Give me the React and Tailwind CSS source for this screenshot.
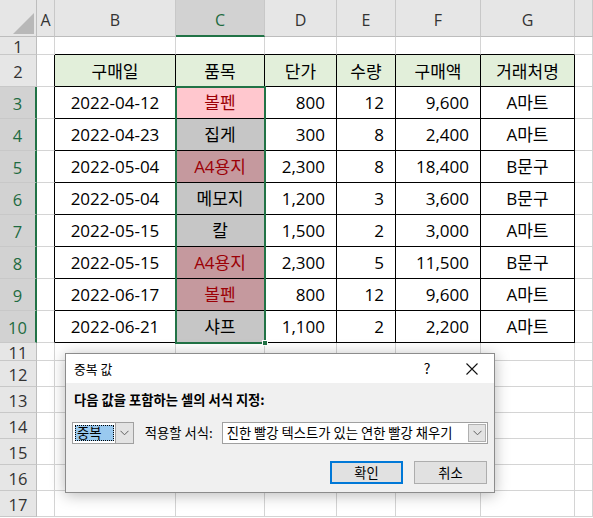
import React from 'react';

const COLS = ['', 'A', 'B', 'C', 'D', 'E', 'F', 'G', ''];
const HEAD = ['구매일', '품목', '단가', '수량', '구매액', '거래처명'];
const ROWS = [
  ['2022-04-12', '볼펜', '800', '12', '9,600', 'A마트'],
  ['2022-04-23', '집게', '300', '8', '2,400', 'A마트'],
  ['2022-05-04', 'A4용지', '2,300', '8', '18,400', 'B문구'],
  ['2022-05-04', '메모지', '1,200', '3', '3,600', 'B문구'],
  ['2022-05-15', '칼', '1,500', '2', '3,000', 'A마트'],
  ['2022-05-15', 'A4용지', '2,300', '5', '11,500', 'B문구'],
  ['2022-06-17', '볼펜', '800', '12', '9,600', 'A마트'],
  ['2022-06-21', '샤프', '1,100', '2', '2,200', 'A마트'],
];
// fill of the selected C column cells (rows 3-10)
const C_FILL = [
  'bg-[#ffc7ce] text-[#9c0006]',
  'bg-[#c6c6c6]',
  'bg-[#c5999e] text-[#9c0006]',
  'bg-[#c6c6c6]',
  'bg-[#c6c6c6]',
  'bg-[#c5999e] text-[#9c0006]',
  'bg-[#c5999e] text-[#9c0006]',
  'bg-[#c6c6c6]',
];

const font = "font-['Open_Sans','Noto_Sans_CJK_KR',sans-serif]";

const Chevron = () => (
  <svg width="9" height="6" viewBox="0 0 9 6" fill="none" stroke="#606060" strokeWidth="1">
    <path d="M0.5 0.8 L4.5 4.8 L8.5 0.8" />
  </svg>
);

const Cell = ({ r, c }) => {
  // column header row
  if (r === 0) {
    if (c === 0) {
      return (
        <div className="relative bg-[#e6e6e6] border-r border-b border-[#bdbdbd]">
          <svg className="absolute left-[13px] top-[13px]" width="21" height="21" viewBox="0 0 21 21">
            <polygon points="21,0 21,21 0,21" fill="#b8b8b8" />
          </svg>
        </div>
      );
    }
    const sel = c === 3;
    return (
      <div
        className={`flex items-center justify-center pt-[4px] text-[16px] border-r border-[#c8c8c8] ${
          sel ? 'bg-[#d2d2d2] text-[#1e6b41] border-b-2 border-b-[#217346]' : 'bg-[#e6e6e6] text-[#333] border-b border-b-[#bdbdbd]'
        }`}
      >
        {COLS[c]}
      </div>
    );
  }
  // row header column
  if (c === 0) {
    const sel = r >= 3 && r <= 10;
    return (
      <div
        className={`flex items-center justify-center pt-[3px] text-[16.5px] border-b border-[#c8c8c8] ${
          sel
            ? 'bg-[#d2d2d2] text-[#1e6b41] border-r-2 border-r-[#217346]'
            : 'bg-[#e6e6e6] text-[#333] border-r border-r-[#bdbdbd]'
        }`}
      >
        {r}
      </div>
    );
  }
  const inTable = r >= 2 && r <= 10 && c >= 2 && c <= 7;
  let cls = 'border-r border-b border-[#d4d4d4] bg-white';
  if (c === 1 && r >= 2 && r <= 10) cls = 'border-r border-b border-[#d4d4d4] border-r-black bg-white';
  if (r === 1 && c >= 2 && c <= 7) cls = 'border-r border-b border-[#d4d4d4] border-b-black bg-white';
  if (!inTable) return <div className={cls} />;

  const k = c - 2;
  if (r === 2) {
    return (
      <div className="flex items-center justify-center pt-[2px] border-r border-b border-black bg-[#e2efda] text-[17px] text-black">
        {HEAD[k]}
      </div>
    );
  }
  const val = ROWS[r - 3][k];
  const right = k >= 2 && k <= 4;
  const fill = k === 1 ? C_FILL[r - 3] : 'bg-white text-black';
  return (
    <div
      className={`flex items-center pt-[1px] border-r border-b border-black text-[17px] ${fill} ${
        right ? 'justify-end pr-[11px]' : 'justify-center'
      } ${k === 1 ? '' : 'text-black'}`}
    >
      {val}
    </div>
  );
};

const Dialog = () => (
  <div className="absolute left-[65px] top-[353px] w-[430px] h-[140px] border border-[#8c8c8c] bg-[#f0f0f0] shadow-[0_2px_14px_rgba(0,0,0,0.28)] flex flex-col font-['Noto_Sans_CJK_KR','Open_Sans',sans-serif] text-[13.3px] text-black">
    <div className="h-[29px] bg-white flex items-center">
      <span className="pl-[8px] text-[12.8px]">중복 값</span>
      <div className="ml-auto flex items-center">
        <span className="w-[46px] text-center text-[14px]">?</span>
        <span className="w-[44px] flex justify-center">
          <svg width="12" height="12" viewBox="0 0 12 12" stroke="#111" strokeWidth="1.1">
            <path d="M0.5 0.5 L11.5 11.5 M11.5 0.5 L0.5 11.5" />
          </svg>
        </span>
      </div>
    </div>
    <div className="flex flex-col px-[6px]">
      <div className="mt-[9px] h-[16px] leading-[16px] pl-[2px] font-bold">다음 값을 포함하는 셀의 서식 지정:</div>
      <div className="mt-[14px] flex items-center h-[22px]">
        <div className="w-[62px] h-[22px] border border-[#a0a0a0] bg-white flex items-stretch p-[2px] pr-0">
          <div className="flex-1 bg-[#99c9ef] border border-dotted border-black flex items-center pl-[1px] leading-none">중복</div>
          <div className="w-[18px] ml-[1px] -my-[2px] bg-[#e3e3e3] border-l border-[#a0a0a0] flex items-center justify-center">
            <Chevron />
          </div>
        </div>
        <span className="ml-[11px] w-[77px]">적용할 서식:</span>
        <div className="w-[267px] h-[22px] border border-[#a0a0a0] bg-white flex items-stretch">
          <div className="flex-1 flex items-center pl-[4px] whitespace-nowrap overflow-hidden">진한 빨강 텍스트가 있는 연한 빨강 채우기</div>
          <div className="w-[18px] my-[1px] mr-[1px] bg-[#e3e3e3] border border-[#b0b0b0] flex items-center justify-center">
            <Chevron />
          </div>
        </div>
      </div>
      <div className="mt-[17px] flex justify-end gap-[11px] pr-[1px]">
        <button className="w-[73px] h-[23px] border-2 border-[#0078d7] bg-[#e1e1e1] flex items-center justify-center">확인</button>
        <button className="w-[73px] h-[23px] border border-[#adadad] bg-[#e1e1e1] flex items-center justify-center">취소</button>
      </div>
    </div>
  </div>
);

export default function App() {
  const rowCount = 18; // header + rows 1..17
  return (
    <div className={`relative w-[593px] h-[518px] overflow-hidden bg-white ${font}`}>
      <div className="grid grid-cols-[37px_18px_121px_89px_72px_59px_85px_94px_18px] grid-rows-[37px_18px_repeat(9,32px)_18px_repeat(6,26px)]">
        {Array.from({ length: rowCount }).map((_, r) =>
          COLS.map((_, c) => <Cell key={`${r}-${c}`} r={r} c={c} />)
        )}
      </div>

      {/* selected range C3:C10 */}
      <div className="absolute left-[175px] top-[86px] w-[91px] h-[258px] border-2 border-[#217346] pointer-events-none" />
      <div className="absolute left-[262px] top-[340px] w-[6px] h-[6px] bg-[#217346] border border-white" />

      <Dialog />
    </div>
  );
}
